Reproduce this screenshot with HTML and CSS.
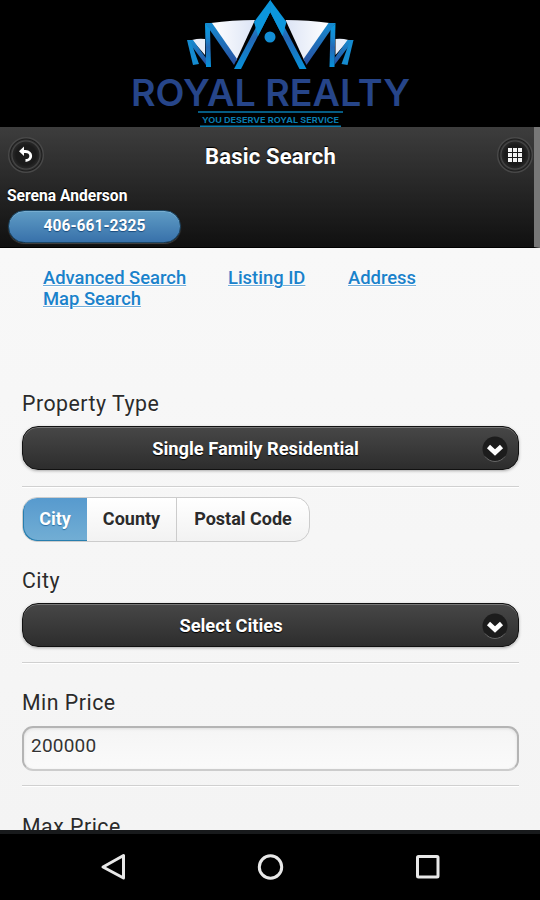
FILE: index.html
```html
<!DOCTYPE html>
<html lang="en">
<head>
<meta charset="utf-8">
<title>Royal Realty</title>
<link rel="stylesheet" href="styles.css">
</head>
<body>
<div class="brand">
  <svg class="logo" width="300" height="127" viewBox="120 0 300 127">
    <defs>
      <linearGradient id="beam" x1="0" y1="0" x2="0" y2="1"><stop offset="0" stop-color="#079ae0"/><stop offset=".3" stop-color="#168bd4"/><stop offset=".55" stop-color="#2467b5"/><stop offset="1" stop-color="#0791da"/></linearGradient>
      <linearGradient id="strip" x1="0" y1="0" x2="0" y2="1"><stop offset="0" stop-color="#168bd0"/><stop offset="1" stop-color="#294fa0"/></linearGradient>
      <linearGradient id="sail" x1="0" y1="0" x2="1" y2="0"><stop offset="0" stop-color="#fff"/><stop offset="1" stop-color="#dce4f5"/></linearGradient>
      <g id="wing">
        <path d="M211 23Q232 20 255 20L236 61Z" fill="url(#sail)"/>
        <path d="M192 40Q199 38 205 39V55Z" fill="#e9eef9"/>
        <path d="M187 40H193L206 58V65Z" fill="url(#strip)"/>
        <path d="M187 40L191 42L199 64L193 65Z" fill="#158bd0"/>
        <path d="M205 23H212L237 59L234 65Z" fill="url(#strip)"/>
        <path d="M205 23L210 29L211 67H206Z" fill="url(#beam)"/>
        <path d="M270.300 0L234 69H241L270.300 12Z" fill="url(#beam)"/>
        <path d="M270.300 0L254 22L258 36L270.300 12Z" fill="#0c96dc"/>
      </g>
    </defs>
    <use href="#wing"/>
    <use href="#wing" transform="matrix(-1 0 0 1 540.5 0)"/>
    <circle cx="270" cy="37" r="5.5" fill="#138ed5"/>
    <text class="logo-name" x="131" y="106" textLength="279" lengthAdjust="spacingAndGlyphs">ROYAL REALTY</text>
    <path d="M198 112H343M200 126.300H341" stroke="#087bae" stroke-width="1.400"/>
    <text class="logo-motto" x="202" y="122.500" textLength="137" lengthAdjust="spacingAndGlyphs">YOU DESERVE ROYAL SERVICE</text>
  </svg>
</div>
<header class="header">
  <div class="title-row">
    <span class="round"><svg width="36" height="36" viewBox="0 0 36 36"><path d="M14.500 14.500H17.500C24.500 14.500 24.500 23.500 17.500 23.500" fill="none" stroke="#fff" stroke-width="2.800"/><path d="M11 14.300L16 9.500V19Z" fill="#fff"/></svg></span>
    <h1>Basic Search</h1>
    <span class="round"><svg width="36" height="36" viewBox="0 0 36 36"><path d="M11 11h4v4h-4zM16 11h4v4h-4zM21 11h4v4h-4zM11 16h4v4h-4zM16 16h4v4h-4zM21 16h4v4h-4zM11 21h4v4h-4zM16 21h4v4h-4zM21 21h4v4h-4z" fill="#f4f4f4"/></svg></span>
  </div>
  <div class="agent">Serena Anderson</div>
  <a class="phone">406-661-2325</a>
</header>
<main class="content">
  <nav class="links"><a>Advanced Search</a><a>Listing ID</a><a>Address</a><a>Map Search</a></nav>
  <section class="field type">
    <label>Property Type</label>
    <div class="select"><span>Single Family Residential</span><svg class="arrow" width="28" height="28" viewBox="0 0 28 28"><circle cx="14" cy="14" r="12.500" fill="#1c1c1c"/><path d="M4 21.500A12.500 12.500 0 0 0 24 21.500" fill="none" stroke="#666"/><path d="M7.500 11.500L14 17.500L20.500 11.500" fill="none" stroke="#fff" stroke-width="4.600"/></svg></div>
  </section>
  <section class="field city">
    <div class="segments"><span class="active">City</span><span>County</span><span>Postal Code</span></div>
    <label>City</label>
    <div class="select cities"><span>Select Cities</span><svg class="arrow" width="28" height="28" viewBox="0 0 28 28"><circle cx="14" cy="14" r="12.500" fill="#1c1c1c"/><path d="M4 21.500A12.500 12.500 0 0 0 24 21.500" fill="none" stroke="#666"/><path d="M7.500 11.500L14 17.500L20.500 11.500" fill="none" stroke="#fff" stroke-width="4.600"/></svg></div>
  </section>
  <section class="field min">
    <label>Min Price</label>
    <div class="input">200000</div>
  </section>
  <section class="max"><label>Max Price</label></section>
</main>
<footer class="system">
  <svg width="28" height="28" viewBox="0 0 28 28"><path d="M4 14L24.500 2.500V25Z"/></svg>
  <svg width="28" height="28" viewBox="0 0 28 28"><circle cx="13.500" cy="14" r="11.200"/></svg>
  <svg width="28" height="28" viewBox="0 0 28 28"><rect x="3.500" y="3.500" width="20.500" height="20.500" rx="1"/></svg>
</footer>
</body>
</html>
```
FILE: styles.css
```css
* { box-sizing: border-box; }
body { margin: 0; width: 540px; height: 900px; overflow: hidden; display: flex; flex-direction: column; background: #000; font-family: Roboto, sans-serif; color: #2b2b2b; }
.brand { height: 127px; flex: none; display: flex; justify-content: center; }
.logo { display: block; }
.logo-name { font: 600 37px Inter, sans-serif; fill: #264589; }
.logo-motto { font: 700 8px Inter, sans-serif; fill: #087bae; }
.header { height: 121px; flex: none; padding: 10px 1px 0 8px; background: linear-gradient(#3d3d3d, #101010); border-right: 6px solid #777; border-bottom: 1px solid #000; color: #fff; text-shadow: 0 -1px 1px #000; }
.title-row { display: flex; justify-content: space-between; align-items: center; height: 36px; }
h1 { margin: 3px 0 0; font-size: 22px; line-height: 37px; letter-spacing: .2px; }
.round { width: 36px; height: 36px; border-radius: 50%; background: radial-gradient(circle, #1b1b1b 0 10px, #262626 13px, #484848 14px, #1b1b1b 16px, #484848 17px); }
.round svg { display: block; }
.agent { margin: 13px 0 0 -1px; height: 18px; font-weight: 700; font-size: 15.6px; line-height: 20px; }
.phone { display: block; width: 173px; height: 33px; margin-top: 6px; border: 1px solid #1c4665; border-radius: 17px; background: linear-gradient(#5f9cc5, #3871aa); box-shadow: inset 0 1px #77add0, 0 1px 1px #444; font-weight: 700; font-size: 15.6px; line-height: 30px; text-align: center; text-shadow: 0 1px 1px #194b7e; }
.content { height: 582px; flex: none; overflow: hidden; background: linear-gradient(#f8f8f8, #f4f4f4); padding: 20px 21px 0 22px; text-shadow: 0 1px 0 #fff; }
.links { height: 124px; margin-left: 21px; display: grid; grid-template: 21px 21px / 185px 120px auto; align-content: start; justify-content: start; font-size: 18.4px; line-height: 20px; font-weight: 500; color: #1a82cb; }
.links a { text-decoration: underline #72aedb; text-decoration-thickness: 1px; justify-self: start; }
label { display: block; height: 24px; font-size: 21.3px; line-height: 24px; font-weight: 400; letter-spacing: .5px; }
.field { border-bottom: 1px solid #d0d0d0; box-shadow: 0 1px #fff; }
.type { height: 95px; }
.select { position: relative; height: 44px; margin-top: 10px; padding-right: 30px; border: 1px solid #111; border-radius: 16px; background: linear-gradient(#474747, #2d2d2d); box-shadow: inset 0 1px #777, 0 1px 3px #aaa; color: #fff; text-shadow: 0 1px 1px #000; font-weight: 700; font-size: 18.3px; line-height: 43px; text-align: center; }
.select.cities { padding-right: 79px; }
.select span { display: block; }
.arrow { position: absolute; right: 9px; top: 8px; }
.city { height: 176px; padding-top: 10px; }
.segments { display: flex; width: 288px; height: 45px; border: 1px solid #ccc; border-radius: 15px; overflow: hidden; background: linear-gradient(#fff, #f2f2f2); font-size: 18px; font-weight: 700; line-height: 42px; text-align: center; }
.segments span { flex: 1; }
.segments span + span { flex: 0 0 90px; border-right: 1px solid #ccc; }
.segments span + span + span { flex: 0 0 132px; border-right: 0; }
.segments .active { background: linear-gradient(#579ace, #72aed4); color: #fff; text-shadow: 0 1px 1px #2a70a5; border-radius: 14px 0 0 14px; box-shadow: inset 1px -1px #287eae; }
.city label { margin-top: 27px; }
.city .select { margin-top: 10px; }
.min { height: 123px; padding-top: 28px; }
.input { height: 45px; margin-top: 11px; padding-left: 7px; border: 2px solid #b4b4b4; border-bottom-color: #ccc; border-radius: 11px; background: linear-gradient(#f5f5f5, #fafafa); box-shadow: inset 0 1px 3px #ddd; font-size: 19px; line-height: 36px; letter-spacing: .2px; color: #333; }
.max { padding-top: 29px; }
.system { height: 70px; flex: none; border-top: 4px solid #181a1c; padding: 0 98px 0 99px; display: flex; justify-content: space-between; align-items: center; background: #000; }
.system svg { fill: none; stroke: #e8e8e8; stroke-width: 3; stroke-linejoin: round; }
```
